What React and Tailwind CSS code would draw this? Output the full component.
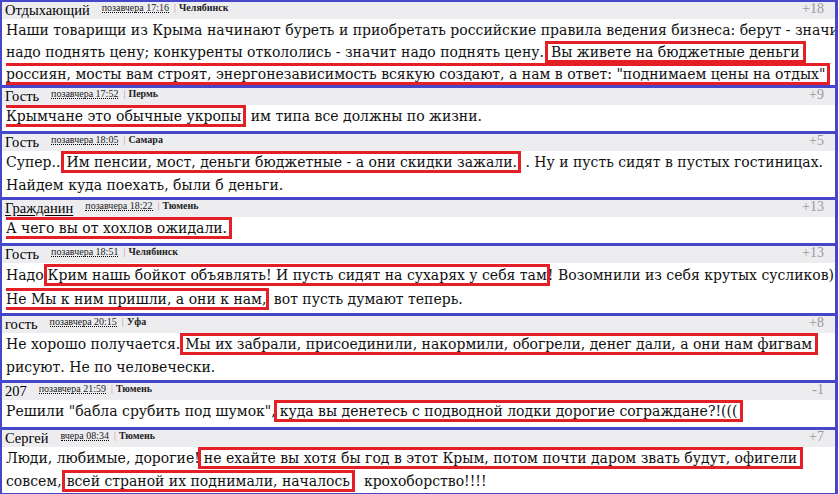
import React from "react";

// Red outline drawn round a quoted passage; clone keeps each line fragment closed.
function Mark({ cls, children }) {
  return (
    <span className={"border-[3px] border-[#e41f26] box-decoration-clone " + cls}>
      {children}
    </span>
  );
}

function Head({ name, date, city, score, link }) {
  return (
    <div className="flex h-[17px] items-start bg-[#ededf0] pl-[3px] pr-[11px] font-['Liberation_Serif',serif]">
      <span
        className={
          "text-[14.5px] leading-[16px] text-black " + (link ? "underline underline-offset-2" : "")
        }
      >
        {name}
      </span>
      <span className="ml-[12px] mt-[1px] border-b border-dotted border-black text-[10px] leading-[9px] text-[#222]">
        {date}
      </span>
      <span className="ml-[5px] mt-[1px] text-[10px] leading-[9px] text-[#c98a8a]">|</span>
      <span className="ml-[3px] mt-[1px] text-[10px] leading-[9px] font-semibold text-[#222]">{city}</span>
      <span className="ml-auto mt-[1px] text-[14px] leading-[11px] text-[#9a9a9a]">{score}</span>
    </div>
  );
}

function Body({ lead, pb, children }) {
  return (
    <div
      className={
        "flex flex-col bg-white pl-[4px] font-['DejaVu_Serif',serif] text-[14px] text-[#111] " +
        lead +
        " " +
        pb
      }
    >
      {children}
    </div>
  );
}

function Line({ children }) {
  return <div className="overflow-x-clip whitespace-nowrap">{children}</div>;
}

export default function App() {
  return (
    <div className="h-[494px] w-[839px] overflow-hidden bg-white">
      <div className="w-[838px] border-l-2 border-r-[3px] border-t-2 border-[#4646c8]">
        <div className="border-b-[3px] border-[#4646c8]">
          <Head name="Отдыхающий" date="позавчера 17:16" city="Челябинск" score="+18" />
          <Body lead="leading-[22px]" pb="pb-0">
            <Line>
              Наши товарищи из Крыма начинают буреть и приобретать российские правила ведения бизнеса: берут - значит
            </Line>
            <Line>
              надо поднять цену; конкуренты откололись - значит надо поднять цену.
              <Mark cls="ml-[1px] pl-[3px] pr-[3px]">Вы живете на бюджетные деньги</Mark>
            </Line>
            <Line>
              <Mark cls="-ml-[4px] pl-[1px] pr-[2px]">
                россиян, мосты вам строят, энергонезависимость всякую создают, а нам в ответ: "поднимаем цены на отдых"
              </Mark>
            </Line>
          </Body>
        </div>

        <div className="border-b-[3px] border-[#4646c8]">
          <Head name="Гость" date="позавчера 17:52" city="Пермь" score="+9" />
          <Body lead="leading-[23px]" pb="pb-[3px]">
            <Line>
              <Mark cls="-ml-[4px] pl-[1px] pr-[2px]">Крымчане это обычные укропы</Mark> им типа все должны по жизни.
            </Line>
          </Body>
        </div>

        <div className="border-b-[3px] border-[#4646c8]">
          <Head name="Гость" date="позавчера 18:05" city="Самара" score="+5" />
          <Body lead="leading-[23px]" pb="pb-0">
            <Line>
              Супер..
              <Mark cls="ml-[1px] pl-[2px] pr-[1px]">Им пенсии, мост, деньги бюджетные - а они скидки зажали.</Mark> . Ну и
              пусть сидят в пустых гостиницах.
            </Line>
            <Line>Найдем куда поехать, были б деньги.</Line>
          </Body>
        </div>

        <div className="border-b-[3px] border-[#4646c8]">
          <Head name="Гражданин" date="позавчера 18:22" city="Тюмень" score="+13" link />
          <Body lead="leading-[23px]" pb="pb-[3px]">
            <Line>
              <Mark cls="-ml-[4px] pl-[1px] pr-[2px]">А чего вы от хохлов ожидали.</Mark>
            </Line>
          </Body>
        </div>

        <div className="border-b-[3px] border-[#4646c8]">
          <Head name="Гость" date="позавчера 18:51" city="Челябинск" score="+13" />
          <Body lead="leading-[24px]" pb="pb-[2px]">
            <Line>
              Надо
              <Mark cls="ml-0 pl-[1px] pr-0 -mr-[2px]">
                Крим нашь бойкот объявлять! И пусть сидят на сухарях у себя там
              </Mark>
              ! Возомнили из себя крутых сусликов)))
            </Line>
            <Line>
              <Mark cls="-ml-[4px] pl-[1px] pr-[0px]">Не Мы к ним пришли, а они к нам,</Mark> вот пусть думают теперь.
            </Line>
          </Body>
        </div>

        <div className="border-b-[3px] border-[#4646c8]">
          <Head name="гость" date="позавчера 20:15" city="Уфа" score="+8" />
          <Body lead="leading-[23px]" pb="pb-[1px]">
            <Line>
              Не хорошо получается.
              <Mark cls="ml-0 pl-[2px] pr-[3px]">
                Мы их забрали, присоединили, накормили, обогрели, денег дали, а они нам фигвам
              </Mark>
            </Line>
            <Line>рисуют. Не по человечески.</Line>
          </Body>
        </div>

        <div className="border-b-[3px] border-[#4646c8]">
          <Head name="207" date="позавчера 21:59" city="Тюмень" score="-1" />
          <Body lead="leading-[23px]" pb="pb-[4px]">
            <Line>
              Решили "бабла срубить под шумок",
              <Mark cls="-ml-[2px] pl-[3px] pr-[3px]">куда вы денетесь с подводной лодки дорогие сограждане?!(((</Mark>
            </Line>
          </Body>
        </div>

        <div className="border-b-[3px] border-[#4646c8]">
          <Head name="Сергей" date="вчера 08:34" city="Тюмень" score="+7" />
          <Body lead="leading-[23px]" pb="pb-0">
            <Line>
              Люди, любимые, дорогие!
              <Mark cls="-ml-[2px] pl-[3px] pr-[3px]">
                не ехайте вы хотя бы год в этот Крым, потом почти даром звать будут, офигели
              </Mark>
            </Line>
            <Line>
              совсем,
              <Mark cls="ml-0 pl-[2px] pr-[2px]">всей страной их поднимали, началось</Mark>
              {"\u00a0 крохоборство!!!!"}
            </Line>
          </Body>
        </div>
      </div>
    </div>
  );
}
